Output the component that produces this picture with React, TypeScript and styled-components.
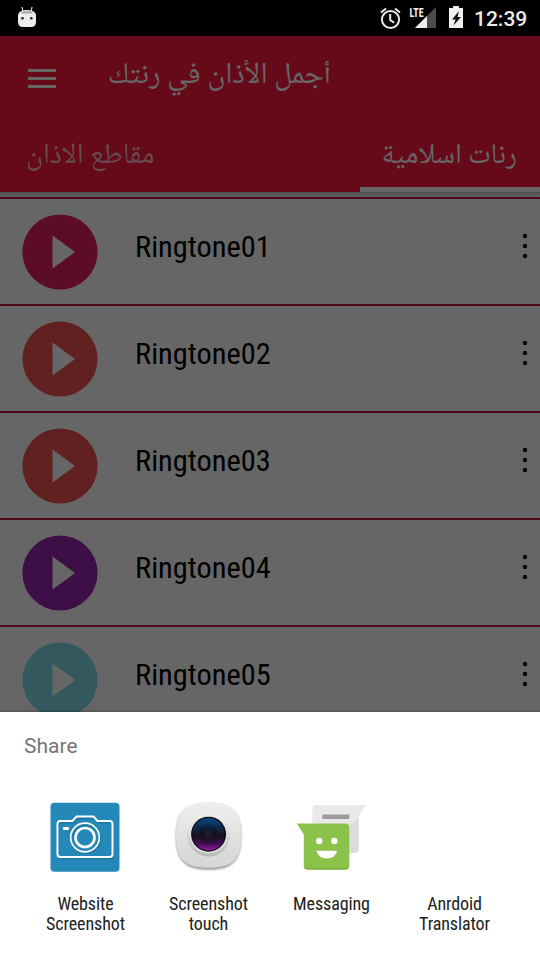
import React from "react";
import styled, { createGlobalStyle } from "styled-components";

const ringtones = [
  { name: "Ringtone01", color: "#e91e63" },
  { name: "Ringtone02", color: "#ef5350" },
  { name: "Ringtone03", color: "#ef5350" },
  { name: "Ringtone04", color: "#9c27b0" },
  { name: "Ringtone05", color: "#80deea" },
];

const PlayIcon = ({ color }: { color: string }) => (
  <svg width="76" height="76" viewBox="0 0 76 76">
    <circle cx="38" cy="38" r="37.600" fill={color} />
    <path d="M30.500 21.500L53 38 30.500 54.500z" fill="#fff" />
  </svg>
);

const MoreIcon = () => (
  <svg width="6" height="26" viewBox="0 0 6 26">
    <circle cx="3" cy="3" r="2.200" />
    <circle cx="3" cy="13" r="2.200" />
    <circle cx="3" cy="23" r="2.200" />
  </svg>
);

const WebsiteIcon = () => (
  <svg width="72" height="72" viewBox="0 0 72 72">
    <rect x="1.5" y="1.8" width="69" height="69" rx="4" fill="#2489b8" />
    <g fill="none" stroke="#17678f" strokeWidth="2" opacity="0.5" transform="translate(0.6 1.4)">
      <path d="M11 20h13l4-4h18l4 4h10q3 0 3 3v30q0 3-3 3H12q-3 0-3-3V23q0-3 3-3z" />
      <circle cx="36.5" cy="36.5" r="14" />
    </g>
    <g fill="none" stroke="#fff" strokeWidth="2">
      <path d="M11.500 20H23.500l4-4.500h17l4 4.500H60.500q3 0 3 3v30q0 3-3 3h-49q-3 0-3-3V23q0-3 3-3z" />
      <circle cx="36" cy="36.500" r="14.300" strokeWidth="1.700" />
      <circle cx="36" cy="36.500" r="9.500" strokeWidth="2.600" />
    </g>
    <rect x="14" y="26" width="6" height="3" rx="1" fill="#fff" />
  </svg>
);

const LensIcon = () => (
  <svg width="72" height="72" viewBox="-0.600 0.300 72 72">
    <defs>
      <linearGradient id="shell" x1="0" y1="0" x2="0" y2="1">
        <stop offset="0" stopColor="#eeeeee" />
        <stop offset="1" stopColor="#d5d5d5" />
      </linearGradient>
      <linearGradient id="ring" x1="0" y1="0" x2="0" y2="1">
        <stop offset="0" stopColor="#f4f4f4" />
        <stop offset="1" stopColor="#b9b9b9" />
      </linearGradient>
      <linearGradient id="glass" x1="0" y1="0" x2="0" y2="1">
        <stop offset="0" stopColor="#074a88" />
        <stop offset="0.3" stopColor="#0b2949" />
        <stop offset="0.55" stopColor="#17101d" />
        <stop offset="0.8" stopColor="#4a0d58" />
        <stop offset="1" stopColor="#8a1d99" />
      </linearGradient>
      <filter id="soft" x="-20%" y="-20%" width="140%" height="140%">
        <feGaussianBlur stdDeviation="1" />
      </filter>
    </defs>
    <path d="M36 3C60 3 68.500 12 68.500 36S60 69 36 69 3.500 60 3.500 36 12 3 36 3z" fill="#999" filter="url(#soft)" />
    <path d="M36 2C60 2 68.500 11 68.500 35S60 67 36 67 3.500 59 3.500 35 12 2 36 2z" fill="url(#shell)" />
    <circle cx="36" cy="34.500" r="21.500" fill="url(#ring)" />
    <circle cx="36" cy="33.500" r="19" fill="#e2e2e2" />
    <circle cx="36" cy="33.500" r="17.500" fill="#0d0d12" />
    <circle cx="36" cy="33.500" r="16.200" fill="url(#glass)" />
    <circle cx="36" cy="33.500" r="9.500" fill="#111118" opacity="0.35" />
    <circle cx="36" cy="33.500" r="4" fill="#25212d" opacity="0.6" />
  </svg>
);

const MessagingIcon = () => (
  <svg width="72" height="72" viewBox="-0.300 0.500 72 72">
    <path d="M21 4.500h49.500l-7 11v33q0 4-4 4H21q-4 0-4-4v-40q0-4 4-4z" fill="#e9e9e9" />
    <path d="M54 25l9.500-8v31.500q0 4-4 4H54z" fill="#dcdcdc" />
    <rect x="27" y="14" width="27" height="4.500" fill="#9b9b9b" />
    <path d="M1.500 23h48.500q4 0 4 4v38q0 4-4 4H12.500q-4 0-4-4V34z" fill="#8bc34a" />
    <path d="M8.500 64v1q0 4 4 4H50q4 0 4-4v-1q0 4-4 4H12.500q-4 0-4-4z" fill="#70a238" />
    <circle cx="24" cy="40.500" r="3.200" fill="#fff" />
    <circle cx="39" cy="40.500" r="3.200" fill="#fff" />
    <path d="M21 50.300h21q-2.500 7.700-10.500 7.700T21 50.300z" fill="#fff" />
  </svg>
);

const apps = [
  { lines: ["Website", "Screenshot"], icon: <WebsiteIcon /> },
  { lines: ["Screenshot", "touch"], icon: <LensIcon /> },
  { lines: ["Messaging"], icon: <MessagingIcon /> },
  { lines: ["Anrdoid", "Translator"], icon: null },
];

const StatusIcons = () => (
  <svg width="94" height="36" viewBox="376 0 94 36">
    <g fill="none" stroke="#e8e8e8" strokeWidth="2">
      <circle cx="390.500" cy="19.500" r="8.600" />
      <path d="M381 12.500l5-4M400 12.500l-5-4M390.200 14v6l4 2.800" />
    </g>
    <path d="M436 7v21h-21z" fill="#4b4b4b" />
    <path d="M427 16v12h-12z" fill="#f0f0f0" />
    <text x="409.500" y="16.500" fill="#f0f0f0" fontSize="13" fontWeight="700" fontFamily="'Roboto Condensed', Roboto, sans-serif" textLength="14" lengthAdjust="spacingAndGlyphs">LTE</text>
    <path d="M453 6h6v2h4v20h-14V8h4z" fill="#f0f0f0" />
    <path d="M459 11l-7 8.500h3.500l-2 6 7.500-8.500h-3.500z" fill="#111" />
  </svg>
);

const App = () => (
  <>
    <GlobalStyle />
    <Phone>
      <StatusBar>
        <svg width="20" height="24" viewBox="0 0 20 24">
          <path d="M5 2l0.800 4M15 2l-0.800 4" stroke="#ddd" strokeWidth="1.200" />
          <path d="M1 10q1-5 9-5t9 5v7q0 5-5 5H6q-5 0-5-5z" fill="#ececec" />
          <path d="M4 7q6-2 12 0l-1 1.500H5z" fill="#aaa" />
          <circle cx="5.500" cy="13.300" r="1.300" fill="#222" />
          <circle cx="14.300" cy="13.300" r="1.300" fill="#222" />
        </svg>
        <StatusRight>
          <StatusIcons />
          <Clock>12:39</Clock>
        </StatusRight>
      </StatusBar>
      <Header>
        <Toolbar>
          <MenuButton><i /><i /><i /></MenuButton>
          <Title $width={222}>أجمل الأذان في رنتك</Title>
        </Toolbar>
        <Tabs>
          <Tab><TabLabel $width={129}>مقاطع الاذان</TabLabel></Tab>
          <Tab $active><TabLabel $width={134}>رنات اسلامية</TabLabel></Tab>
        </Tabs>
      </Header>
      <HeaderShadow />
      <List>
        {ringtones.map((item) => (
          <Row key={item.name}>
            <PlayIcon color={item.color} />
            <Name>{item.name}</Name>
            <More><MoreIcon /></More>
          </Row>
        ))}
      </List>
      <Scrim />
      <Sheet>
        <SheetTitle>Share</SheetTitle>
        <AppGrid>
          {apps.map((app) => (
            <AppItem key={app.lines.join(" ")}>
              <IconBox>{app.icon}</IconBox>
              {app.lines.map((line) => <AppLabel key={line}>{line}</AppLabel>)}
            </AppItem>
          ))}
        </AppGrid>
      </Sheet>
    </Phone>
  </>
);

const GlobalStyle = createGlobalStyle`
  * {
    box-sizing: border-box;
  }
  body {
    margin: 0;
    font-family: Roboto, sans-serif;
  }
  svg {
    display: block;
  }
`;

const Phone = styled.div`
  position: relative;
  width: 540px;
  height: 960px;
  overflow: hidden;
  display: flex;
  flex-direction: column;
  background: #fff;
`;

const StatusBar = styled.div`
  position: relative;
  z-index: 3;
  flex: none;
  height: 36px;
  padding: 0 12px 0 17px;
  display: flex;
  align-items: center;
  justify-content: space-between;
  background: #000;
  & > svg {
    margin-bottom: 3px;
  }
`;

const StatusRight = styled.div`
  display: flex;
  align-items: center;
`;

const Clock = styled.div`
  width: 58px;
  padding: 2px 0 0 4px;
  font-size: 21px;
  font-weight: 500;
  line-height: 34px;
  color: #ececec;
`;

const Header = styled.div`
  flex: none;
  height: 156px;
  background: #ff1740;
`;

const Toolbar = styled.div`
  display: flex;
  align-items: center;
  height: 84px;
  padding-left: 28px;
`;

const MenuButton = styled.div`
  display: flex;
  flex-direction: column;
  gap: 5px;
  width: 28px;
  margin-right: 53px;
  i {
    height: 3px;
    background: #fff;
  }
`;

//아랍어 텍스트
const Arabic = styled.div<{ $width: number }>`
  width: ${({ $width }) => $width}px;
  font-family: "Noto Naskh Arabic UI", "Noto Naskh Arabic", "DejaVu Sans", sans-serif;
  line-height: 36px;
  white-space: nowrap;
  direction: rtl;
  color: #fff;
`;

const Title = styled(Arabic)`
  margin-bottom: 4px;
  font-size: 30.2px;
`;

const TabLabel = styled(Arabic)`
  font-size: 28.9px;
`;

const Tabs = styled.div`
  display: flex;
  justify-content: space-between;
  height: 72px;
`;

const Tab = styled.div<{ $active?: boolean }>`
  display: flex;
  justify-content: center;
  width: 180px;
  padding-top: 18px;
  border-bottom: 5px solid ${({ $active }) => ($active ? "#fff" : "transparent")};
  ${TabLabel} {
    opacity: ${({ $active }) => ($active ? 1 : 0.7)};
  }
`;

const HeaderShadow = styled.div`
  flex: none;
  height: 5px;
  background: linear-gradient(#c8c8c8, #f6f6f6);
`;

const List = styled.div`
  border-top: 2px solid #d0143c;
`;

const Row = styled.div`
  display: flex;
  height: 107px;
  padding: 15px 12px 0 22px;
  border-bottom: 2px solid #d0143c;
`;

const Name = styled.div`
  flex: 1;
  padding: 15px 0 0 37px;
  font-family: "Roboto Condensed", Roboto, sans-serif;
  font-stretch: 75%;
  font-size: 30.4px;
  line-height: 36px;
  color: #000;
`;

const More = styled.div`
  padding-top: 19px;
`;

const Scrim = styled.div`
  position: absolute;
  inset: 0;
  z-index: 1;
  background: rgba(0, 0, 0, 0.6);
`;

const Sheet = styled.div`
  position: absolute;
  left: 0;
  right: 0;
  bottom: 0;
  z-index: 2;
  height: 248px;
  padding: 16px 24px 0;
  background: #fff;
  box-shadow: 0 0 3px rgba(0, 0, 0, 0.4);
`;

const SheetTitle = styled.div`
  font-size: 21px;
  line-height: 36px;
  color: #757575;
`;

const AppGrid = styled.div`
  display: grid;
  grid-template-columns: repeat(4, 123px);
  padding-top: 37px;
`;

const AppItem = styled.div`
  display: flex;
  flex-direction: column;
  align-items: center;
`;

const IconBox = styled.div`
  width: 72px;
  height: 93px;
  margin-right: 1px;
`;

const AppLabel = styled.div`
  font-family: "Roboto Condensed", Roboto, sans-serif;
  font-stretch: 75%;
  font-size: 18px;
  line-height: 20px;
  letter-spacing: -0.1px;
  color: #212121;
`;

export default App;
